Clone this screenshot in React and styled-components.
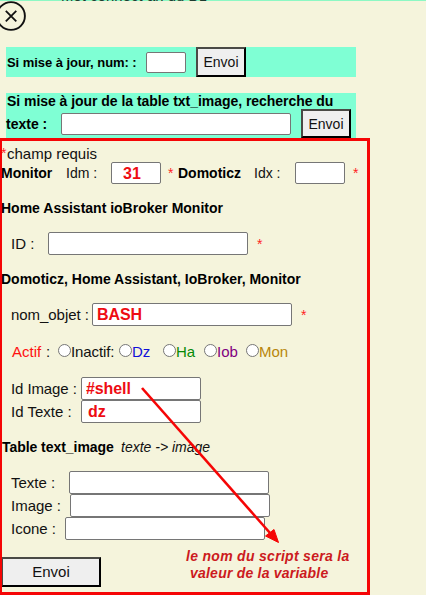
import React from "react";
import styled, { createGlobalStyle } from "styled-components";

const Global = createGlobalStyle`
  * { box-sizing: border-box; }
  body { margin: 0; background: #f5f4dc; overflow: hidden; }
`;

const Page = styled.main`
  position: relative;
  width: 426px;
  height: 595px;
  overflow: hidden;
  background: #f5f4dc;
  color: #111;
  font: 15px "Liberation Sans", Arial, sans-serif;
`;

const TopStrip = styled.div`
  height: 1px;
  margin-bottom: 3px;
  background: #8df8c4;
  padding-left: 61px;
  overflow: hidden;
  line-height: 16px;
  white-space: nowrap;
  color: #1c3a2c;
  span { display: block; margin-top: -12px; }
`;

const Close = styled.button`
  display: block;
  width: 30px;
  height: 30px;
  margin: -3px 0 16px -4px;
  padding: 0;
  border: 0;
  background: none;
  svg { display: block; }
`;

const SearchBar = styled.form`
  width: 350px;
  height: ${(p) => p.$h}px;
  margin: 0 0 16px 6px;
  background: #7fffd4;
`;

const Row = styled.div`
  display: flex;
  align-items: center;
  height: ${(p) => p.$h || 23}px;
  margin-top: ${(p) => p.$top || 0}px;
  padding-left: ${(p) => p.$left || 0}px;
`;

const Text = styled.span`
  flex: none;
  width: ${(p) => (p.$w ? `${p.$w}px` : "auto")};
  white-space: pre;
  color: ${(p) => p.$color || "inherit"};
  font-size: ${(p) => p.$size || 15}px;
  letter-spacing: ${(p) => p.$ls || 0}px;
`;

const Bold = styled(Text)`
  font-weight: bold;
  color: #000;
`;

const Italic = styled(Text)`
  font-style: italic;
`;

const Star = styled(Text)`
  color: #f22;
  font-size: 14px;
`;

const Field = styled.input`
  flex: none;
  width: ${(p) => p.$w}px;
  height: ${(p) => p.$h || 23}px;
  margin: 0 ${(p) => p.$gap || 0}px 0 0;
  padding: ${(p) => p.$pt || 0}px 0 0 ${(p) => p.$pad || 4}px;
  border: 1px solid #767676;
  border-radius: 2px;
  background: #fff;
  color: #ee0c12;
  font: bold ${(p) => p.$size || 15}px "Liberation Sans", Arial, sans-serif;
  letter-spacing: ${(p) => p.$ls || 0}px;
`;

const Submit = styled.button`
  flex: none;
  width: ${(p) => p.$w}px;
  height: ${(p) => p.$h || 30}px;
  padding: 0 0 ${(p) => p.$pb || 0}px;
  border: 2px solid;
  border-color: #4a4a46 #000 #000 #4a4a46;
  background: #efefef;
  color: #111;
  font: ${(p) => p.$size || 14}px "Liberation Sans", Arial, sans-serif;
`;

const Form = styled.form`
  margin: 0 0 0 1px;
`;

const Radio = styled.input`
  appearance: none;
  flex: none;
  width: 13px;
  height: 13px;
  margin: 0 0 1px;
  border: 1px solid #767676;
  border-radius: 50%;
  background: #fff;
`;

const Frame = styled.div`
  position: absolute;
  left: 0;
  top: 138px;
  width: 370px;
  height: 457px;
  border: 3px solid #f50505;
  border-left-width: 2px;
  pointer-events: none;
`;

const Arrow = styled.svg`
  position: absolute;
  left: 0;
  top: 0;
  pointer-events: none;
`;

const Note = styled.p`
  position: absolute;
  left: 186px;
  top: 548px;
  margin: 0;
  color: #cc1a20;
  font: italic bold 14px/17px "Liberation Sans", Arial, sans-serif;
  letter-spacing: 0.3px;
  white-space: nowrap;
  span { display: block; }
  span + span { padding-left: 4px; letter-spacing: 0.22px; }
`;

export default function App() {
  return (
    <Page>
      <Global />
      <TopStrip><span>Mot connect an du Dz</span></TopStrip>
      <Close type="button" aria-label="Fermer">
        <svg width="30" height="30" viewBox="0 0 30 30" fill="none" stroke="#111">
          <circle cx="15" cy="15" r="13.9" strokeWidth="1.9" />
          <path d="M9.8 9.8 20.3 20.3M20.3 9.8 9.8 20.3" strokeWidth="1.8" />
        </svg>
      </Close>

      <SearchBar $h={30}>
        <Row $h={30} $left={1}>
          <Bold $w={139} $size={13} $ls={-0.05}>Si mise à jour, num: :</Bold>
          <Field $w={40} $h={21} $gap={10} />
          <Submit type="button" $w={50} $pb={1}>Envoi</Submit>
        </Row>
      </SearchBar>
      <SearchBar $h={45}>
        <Row $h={16} $left={1}><Bold $size={14} $ls={-0.04}>Si mise à jour de la table txt_image, recherche du</Bold></Row>
        <Row $h={29}>
          <Bold $w={55} $size={14}>texte :</Bold>
          <Field $w={230} $h={22} $gap={10} />
          <Submit type="button" $w={50} $h={29}>Envoi</Submit>
        </Row>
      </SearchBar>

      <Form>
        <Row $h={14} $top={-8}><Star $w={6}>*</Star><Text>champ requis</Text></Row>
        <Row $h={22} $top={2}>
          <Bold $w={65} $size={14}>Monitor</Bold>
          <Text $w={45} $size={14}>Idm :</Text>
          <Field $w={50} $h={22} $gap={7} $pad={11} $pt={1} $size={16} defaultValue="31" />
          <Star $w={10}>*</Star>
          <Bold $w={76} $size={14}>Domoticz</Bold>
          <Text $w={41} $size={14}>Idx :</Text>
          <Field $w={50} $h={22} $gap={8} />
          <Star>*</Star>
        </Row>
        <Row $h={16} $top={16}><Bold $size={14}>Home Assistant ioBroker Monitor</Bold></Row>
        <Row $top={16} $left={10}>
          <Text $w={37}>ID :</Text><Field $w={200} $gap={9} /><Star>*</Star>
        </Row>
        <Row $h={16} $top={16}><Bold $size={14}>Domoticz, Home Assistant, IoBroker, Monitor</Bold></Row>
        <Row $top={16} $left={10}>
          <Text $w={81} $ls={-0.05}>nom_objet :</Text>
          <Field $w={200} $gap={9} $pt={1} $size={16} $ls={-0.1} defaultValue="BASH" />
          <Star>*</Star>
        </Row>
        <Row $h={20} $top={15} $left={11}>
          <Text $w={34} $color="#f11">Actif</Text>
          <Text $w={12}>:</Text>
          <Radio type="radio" name="actif" /><Text $w={48} $ls={-0.1}>Inactif:</Text>
          <Radio type="radio" name="actif" /><Text $w={31} $color="#1010d8">Dz</Text>
          <Radio type="radio" name="actif" /><Text $w={28} $color="#078a07">Ha</Text>
          <Radio type="radio" name="actif" /><Text $w={29} $color="#800080">Iob</Text>
          <Radio type="radio" name="actif" /><Text $color="#b8860b">Mon</Text>
        </Row>
        <Row $top={16} $left={10}>
          <Text $w={70} $ls={-0.1}>Id Image :</Text><Field $w={120} $size={16} $ls={-0.1} defaultValue="#shell" />
        </Row>
        <Row $left={10}>
          <Text $w={70}>Id Texte :</Text><Field $w={120} $pad={6} $pt={1} $size={16} defaultValue="dz" />
        </Row>
        <Row $h={16} $top={16} $left={1}>
          <Bold $w={119} $size={14} $ls={-0.05}>Table text_image</Bold><Italic $size={14}>{"texte -> image"}</Italic>
        </Row>
        <Row $top={16} $left={10}><Text $w={58}>Texte :</Text><Field $w={200} /></Row>
        <Row $left={10}><Text $w={59}>Image :</Text><Field $w={200} /></Row>
        <Row $left={10}><Text $w={54}>Icone :</Text><Field $w={200} /></Row>
        <Row $h={30} $top={17}><Submit type="button" $w={100} $size={15} $pb={1}>Envoi</Submit></Row>
      </Form>

      <Frame />
      <Arrow width="426" height="595" viewBox="0 0 426 595">
        <path d="M142 388 270 533" stroke="#f50505" strokeWidth="2.6" />
        <path d="M278.5 542.5 265.5 536 274 529.5Z" fill="#f50505" stroke="#f50505" />
      </Arrow>
      <Note><span>le nom du script sera la</span><span>valeur de la variable</span></Note>
    </Page>
  );
}
